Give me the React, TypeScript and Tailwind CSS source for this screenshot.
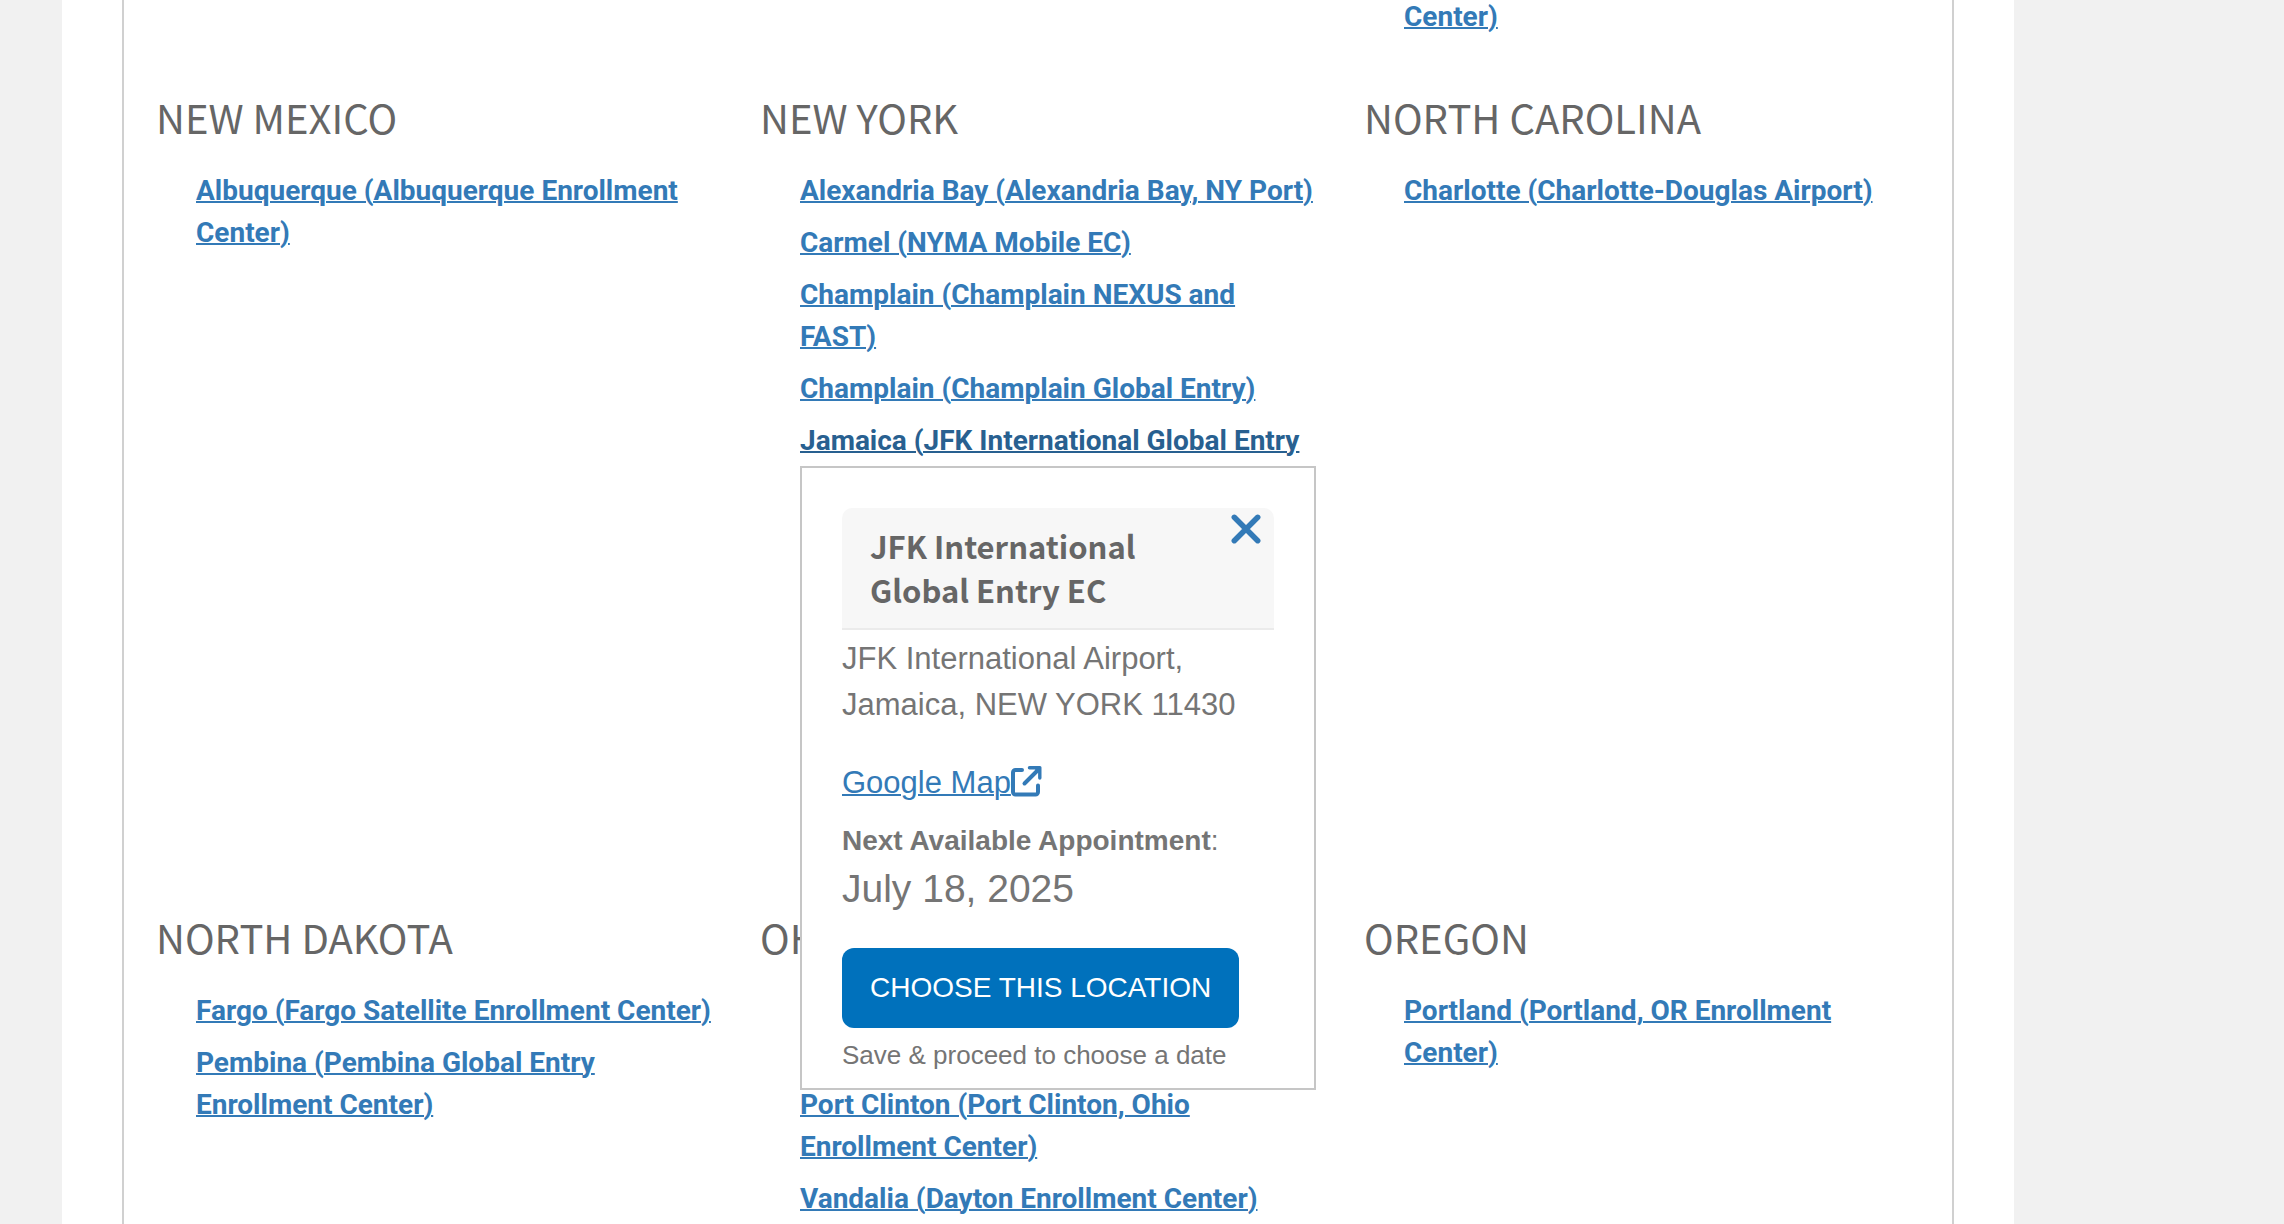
import { useState } from "react";

type Location = { id: string; name: string; covered?: boolean };
type StateGroup = { state: string; locations: Location[] };

// "covered" rows sit under the open popup and stay hidden while it is shown
const groups: StateGroup[] = [
  {
    state: "NEW MEXICO",
    locations: [{ id: "albuquerque", name: "Albuquerque (Albuquerque Enrollment Center)" }],
  },
  {
    state: "NEW YORK",
    locations: [
      { id: "alexandria-bay", name: "Alexandria Bay (Alexandria Bay, NY Port)" },
      { id: "carmel", name: "Carmel (NYMA Mobile EC)" },
      { id: "champlain-nexus", name: "Champlain (Champlain NEXUS and FAST)" },
      { id: "champlain-ge", name: "Champlain (Champlain Global Entry)" },
      { id: "jfk", name: "Jamaica (JFK International Global Entry EC)" },
      { id: "latham", name: "Latham (Albany Mobile EC)", covered: true },
      { id: "new-york", name: "New York (NYC Enrollment Center)", covered: true },
      { id: "niagara-falls", name: "Niagara Falls (Niagara Falls Enrollment Center)", covered: true },
      { id: "ogdensburg", name: "Ogdensburg (Ogdensburg Port)", covered: true },
      { id: "rochester", name: "Rochester (Rochester Airport)", covered: true },
      { id: "syracuse", name: "Syracuse (Syracuse Airport)", covered: true },
    ],
  },
  {
    state: "NORTH CAROLINA",
    locations: [{ id: "charlotte", name: "Charlotte (Charlotte-Douglas Airport)" }],
  },
  {
    state: "NORTH DAKOTA",
    locations: [
      { id: "fargo", name: "Fargo (Fargo Satellite Enrollment Center)" },
      { id: "pembina", name: "Pembina (Pembina Global Entry Enrollment Center)" },
    ],
  },
  {
    state: "OHIO",
    locations: [
      { id: "middleburg", name: "Middleburg Heights (Cleveland Enrollment Center)", covered: true },
      { id: "port-clinton", name: "Port Clinton (Port Clinton, Ohio Enrollment Center)" },
      { id: "vandalia", name: "Vandalia (Dayton Enrollment Center)" },
    ],
  },
  {
    state: "OREGON",
    locations: [{ id: "portland", name: "Portland (Portland, OR Enrollment Center)" }],
  },
];

function CloseIcon() {
  return (
    <svg
      viewBox="0 0 30 30"
      className="size-[30px]"
      fill="none"
      stroke="currentColor"
      strokeWidth="5.5"
      strokeLinecap="round"
      aria-hidden="true"
    >
      <path d="M3.3 3.3l23.4 23.4M26.7 3.3L3.3 26.7" />
    </svg>
  );
}

function ExternalIcon() {
  return (
    <svg
      viewBox="0 0 32 32"
      className="inline-block size-8 align-[-5px]"
      fill="none"
      stroke="currentColor"
      strokeWidth="4"
      strokeLinecap="round"
      aria-hidden="true"
    >
      <path d="M11 4H4.500a2.500 2.500 0 0 0-2.500 2.500v19.500a2.500 2.500 0 0 0 2.500 2.500h20a2.500 2.500 0 0 0 2.500-2.500v-6.500" />
      <path d="M13.500 17.500L28 3" />
      <path d="M18.500 0H29a1.500 1.500 0 0 1 1.500 1.500V12a1.700 1.700 0 0 1-3.400 0V6.500L24 3.500H18.500a1.700 1.700 0 0 1 0-3.500z" fill="currentColor" stroke="none" />
    </svg>
  );
}

function LocationPopup({ onClose }: { onClose: () => void }) {
  return (
    <div
      role="dialog"
      aria-labelledby="popup-title"
      className="absolute inset-x-0 top-full z-10 border-2 border-[#c6c6c6] bg-white px-10 pt-10 pb-[10px] font-['Liberation_Sans',Arial,sans-serif] text-[31px] leading-[46px] text-[#757575]"
    >
      <div className="relative rounded-t-[10px] border-b-2 border-[#ebebeb] bg-[#f7f7f7] px-7 py-4">
        <h4
          id="popup-title"
          className="pr-16 font-['Noto_Sans_CJK_SC',sans-serif] text-[31px] leading-[44px] font-bold text-[#666]"
        >
          JFK International Global Entry EC
        </h4>
        <button
          type="button"
          aria-label="Close"
          onClick={onClose}
          className="absolute top-[6px] right-[13px] text-[#337ab7]"
        >
          <CloseIcon />
        </button>
      </div>
      <p className="mt-[6px]">JFK International Airport, Jamaica, NEW YORK 11430</p>
      <p className="mt-8">
        <a href="#map" className="text-[#337ab7]">
          <span className="underline decoration-2">Google Map</span>
          <ExternalIcon />
        </a>
      </p>
      <p className="mt-3 text-[28px]">
        <strong>Next Available Appointment</strong>:
      </p>
      <p className="text-[39px] leading-[50px]">July 18, 2025</p>
      <button
        type="button"
        className="mt-[34px] h-20 rounded-xl bg-[#0071bc] px-7 text-[28px] whitespace-nowrap text-white"
      >
        CHOOSE THIS LOCATION
      </button>
      <p className="mt-1 text-[26px]">Save &amp; proceed to choose a date</p>
    </div>
  );
}

export default function App() {
  const [openId, setOpenId] = useState<string | null>("jfk");

  const linkClass = "underline decoration-2 hover:text-[#23527c]";

  return (
    <div className="h-screen overflow-hidden bg-[#f1f1f1] pr-[270px] pl-[62px] font-[Roboto,sans-serif]">
      <main className="min-h-full bg-white px-[60px]">
        <div className="border-x-2 border-[#d0d0d0] px-8">
          {/* tail of the previous row of states */}
          <div className="grid grid-cols-3 gap-x-12">
            <div className="col-start-3 -mt-1 pl-10 text-[28px] leading-[42px] font-bold text-[#337ab7]">
              <a href="#center" className={linkClass}>
                Center)
              </a>
            </div>
          </div>

          <div className="grid grid-cols-3 gap-x-12 pb-10">
            {groups.map((group) => (
              <section key={group.state} className="pt-[50px]">
                <h3 className="font-['Noto_Sans_CJK_SC',sans-serif] text-[40px] leading-[58px] text-[#666]">
                  {group.state}
                </h3>
                <ul className="mt-6 pl-10 text-[28px] leading-[42px] font-bold text-[#337ab7]">
                  {group.locations.map((loc) => (
                    <li
                      key={loc.id}
                      className={
                        openId === "jfk" && loc.covered
                          ? "invisible mb-[10px] last:mb-0"
                          : "relative mb-[10px] last:mb-0"
                      }
                    >
                      {openId === loc.id ? (
                        <>
                          <a href={"#" + loc.id} className="text-[#286090] underline decoration-2">
                            {loc.name}
                          </a>
                          <div className="absolute inset-x-0 top-0 h-[46px] font-normal">
                            <LocationPopup onClose={() => setOpenId(null)} />
                          </div>
                        </>
                      ) : (
                        <a href={"#" + loc.id} className={linkClass} onClick={() => setOpenId(loc.id)}>
                          {loc.name}
                        </a>
                      )}
                    </li>
                  ))}
                </ul>
              </section>
            ))}
          </div>
        </div>
      </main>
    </div>
  );
}
